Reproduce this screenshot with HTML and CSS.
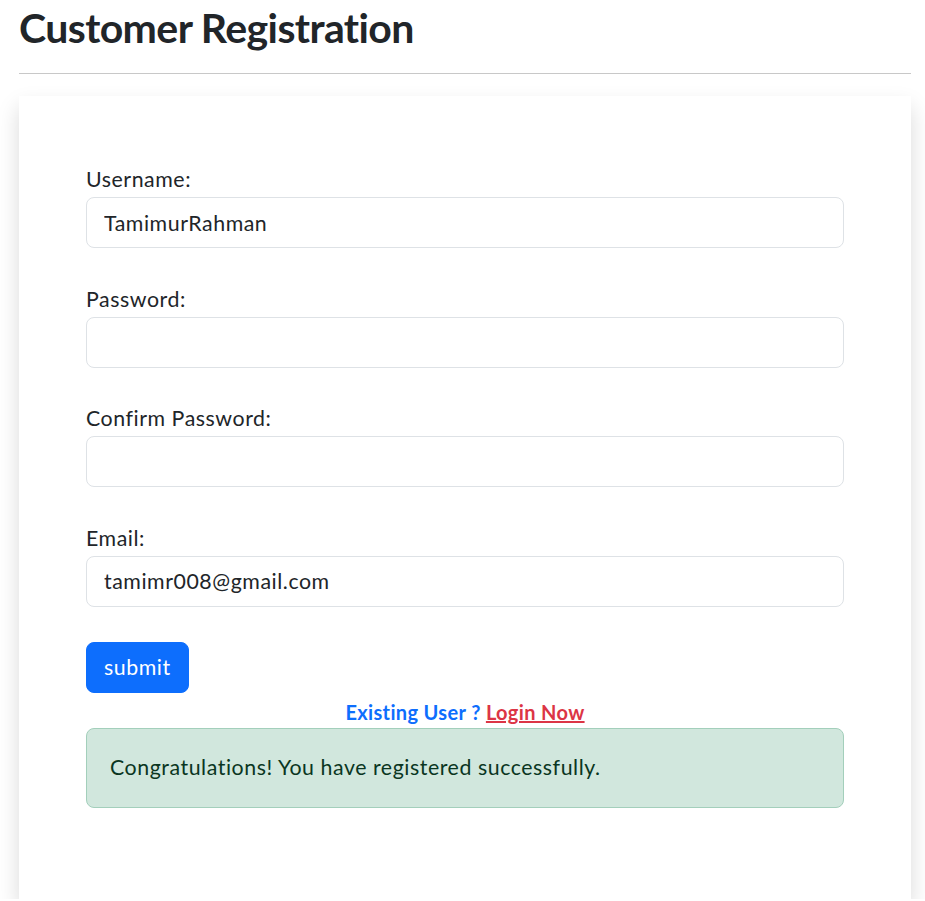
FILE: index.html
```html
<!DOCTYPE html>
<html lang="en">
<head>
<meta charset="utf-8">
<title>Customer Registration</title>
<link rel="stylesheet" href="styles.css">
</head>
<body>
<div class="page">
  <h1 class="title">Customer Registration</h1>
  <hr class="rule">
  <div class="card">
    <form class="form">
      <div class="group">
        <label class="label" for="u">Username:</label>
        <input class="input" id="u" type="text" value="TamimurRahman">
      </div>
      <div class="group">
        <label class="label" for="p">Password:</label>
        <input class="input" id="p" type="password">
      </div>
      <div class="group">
        <label class="label" for="c">Confirm Password:</label>
        <input class="input" id="c" type="password">
      </div>
      <div class="group">
        <label class="label" for="e">Email:</label>
        <input class="input" id="e" type="email" value="tamimr008@gmail.com">
      </div>
      <button class="btn" type="button">submit</button>
      <p class="existing">Existing User ? <a class="login" href="#">Login Now</a></p>
      <div class="alert">Congratulations! You have registered successfully.</div>
    </form>
  </div>
</div>
</body>
</html>
```
FILE: styles.css
```css
* { box-sizing: border-box; }
html, body { margin: 0; padding: 0; background: #fff; }
body {
  font-family: "Lato", "Liberation Sans", sans-serif;
  font-size: 21.33px;
  line-height: 1.5;
  letter-spacing: 0.55px;
  color: #212529;
}
.page { padding: 0 14px 0 19px; }
.title {
  margin: 2px 0 0;
  font-size: 41px;
  line-height: 51px;
  font-weight: 700;
  letter-spacing: -0.6px;
  color: #212529;
}
.rule {
  margin: 20px 0 0;
  border: 0;
  border-top: 1px solid #c8c8c8;
  height: 0;
}
.card {
  margin-top: 22px;
  background: #fff;
  box-shadow: 0 11px 21px rgba(0, 0, 0, 0.15);
  padding: 67px 67px 70px;
}
.form { display: flex; flex-direction: column; align-items: stretch; }
.group { display: flex; flex-direction: column; margin-bottom: 34.5px; }
.label { display: block; margin-bottom: 2px; line-height: 32px; }
.input {
  height: 51px;
  padding: 0 17px;
  font: inherit;
  letter-spacing: inherit;
  color: #212529;
  border: 1px solid #dee2e6;
  border-radius: 8px;
  background: #fff;
  outline: none;
}
.btn {
  align-self: flex-start;
  margin-top: 1px;
  height: 51px;
  padding: 0 17px;
  font: inherit;
  letter-spacing: inherit;
  color: #fff;
  background: #0d6efd;
  border: 1px solid #0d6efd;
  border-radius: 8px;
}
.existing {
  margin: 7px 0 4px;
  text-align: center;
  font-size: 20px;
  line-height: 24px;
  font-weight: 700;
  letter-spacing: 0.35px;
  color: #0d6efd;
}
.login { color: #dc3545; text-decoration: underline; }
.alert {
  padding: 22px 23px 24px;
  line-height: 32px;
  color: #0a3622;
  background: #d1e7dd;
  border: 1px solid #a3cfbb;
  border-radius: 8px;
  margin-bottom: 21px;
}
```
